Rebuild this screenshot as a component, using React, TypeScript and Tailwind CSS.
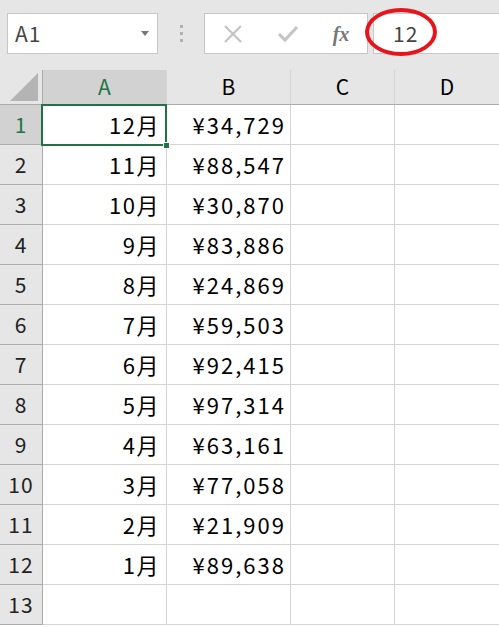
import React from 'react';

const rows: [string, string][] = [
  ['12月', '¥34,729'],
  ['11月', '¥88,547'],
  ['10月', '¥30,870'],
  ['9月', '¥83,886'],
  ['8月', '¥24,869'],
  ['7月', '¥59,503'],
  ['6月', '¥92,415'],
  ['5月', '¥97,314'],
  ['4月', '¥63,161'],
  ['3月', '¥77,058'],
  ['2月', '¥21,909'],
  ['1月', '¥89,638'],
  ['', ''],
];

const font = { fontFamily: '"Noto Sans CJK JP", "Noto Sans", sans-serif' };

const Toolbar: React.FC = () => (
  <div className="h-[70px] bg-[#e6e6e6] flex items-start pt-[13px] pl-[7px]">
    {/* name box */}
    <div className="w-[151px] h-[41px] bg-white border border-[#c6c6c6] flex items-center justify-between pl-[7px] pr-[8px]">
      <span className="text-[21px] text-[#444] tracking-[1px]">A1</span>
      <svg width="8" height="5" viewBox="0 0 8 5"><path d="M0 0h8L4 5z" fill="#777" /></svg>
    </div>
    {/* drag dots */}
    <div className="w-[46px] h-[41px] flex flex-col items-center justify-center gap-[4px]">
      <span className="w-[3px] h-[3px] bg-[#b0b0b0]" />
      <span className="w-[3px] h-[3px] bg-[#b0b0b0]" />
      <span className="w-[3px] h-[3px] bg-[#b0b0b0]" />
    </div>
    {/* cancel / enter / fx */}
    <div className="w-[164px] h-[41px] bg-white border border-[#c6c6c6] flex items-center">
      <div className="w-[55px] flex justify-center">
        <svg width="20" height="20" viewBox="0 0 20 20"><path d="M2 2L18 18M18 2L2 18" stroke="#c4c4c4" strokeWidth="2.2" /></svg>
      </div>
      <div className="w-[55px] flex justify-center">
        <svg width="22" height="18" viewBox="0 0 22 18"><path d="M2 9L8 15L20 2" stroke="#c4c4c4" strokeWidth="3" fill="none" /></svg>
      </div>
      <div className="w-[52px] flex justify-center">
        <span className="text-[20px] italic font-bold text-[#777]" style={{ fontFamily: '"Liberation Serif", serif' }}>fx</span>
      </div>
    </div>
    {/* formula input */}
    <div className="ml-[5px] flex-1 h-[41px] bg-white border border-[#c6c6c6] border-r-0 relative flex items-center pl-[19px]">
      <span className="text-[21px] text-[#444] tracking-[1px]">12</span>
      <div className="absolute left-[-9px] top-[-6px] w-[72px] h-[48px] rounded-[50%] border-[4px] border-[#e8141c]" />
    </div>
  </div>
);

export default function App() {
  const cols = ['w-[124px]', 'w-[124px]', 'w-[104px]', 'flex-1'];
  return (
    <div className="w-[499px] h-[627px] overflow-hidden bg-white text-black" style={font}>
      <Toolbar />
      {/* column header */}
      <div className="flex h-[35px] bg-[#e6e6e6] border-b border-[#ababab]">
        <div className="w-[43px] border-r border-[#ababab] flex items-end justify-end pr-[4px] pb-[3px]">
          <svg width="28" height="28" viewBox="0 0 28 28"><path d="M28 0V28H0z" fill="#b4b4b4" /></svg>
        </div>
        {['A', 'B', 'C', 'D'].map((c, i) => (
          <div
            key={c}
            className={`${cols[i]} ${i === 0 ? 'bg-[#d2d2d2] text-[#217346]' : 'text-black'} ${i < 3 ? 'border-r border-[#d4d4d4]' : ''} flex items-center justify-center text-[21px]`}
          >
            {c}
          </div>
        ))}
      </div>
      {rows.map(([a, b], r) => (
        <div key={r} className="flex h-[40px]">
          <div
            className={`w-[43px] border-r border-b border-[#ababab] flex items-center justify-center text-[21px] tracking-[1px] ${r === 0 ? 'bg-[#d2d2d2] text-[#217346]' : 'bg-[#e6e6e6] text-[#222]'}`}
          >
            {r + 1}
          </div>
          <div className="w-[124px] border-r border-b border-[#d4d4d4] flex items-center justify-end pr-[6px] text-[22px] tracking-[1.5px] relative">
            {a}
            {r === 0 && (
              <div className="absolute left-[-2px] top-[-1px] w-[126px] h-[42px] border-2 border-[#217346] z-10">
                <div className="absolute right-[-5px] bottom-[-5px] w-[7px] h-[7px] bg-[#217346] border border-white" />
              </div>
            )}
          </div>
          <div className="w-[124px] border-r border-b border-[#d4d4d4] flex items-center justify-end pr-[4px] text-[22px] tracking-[2px]">
            {b}
          </div>
          <div className="w-[104px] border-r border-b border-[#d4d4d4]" />
          <div className="flex-1 border-b border-[#d4d4d4]" />
        </div>
      ))}
    </div>
  );
}
